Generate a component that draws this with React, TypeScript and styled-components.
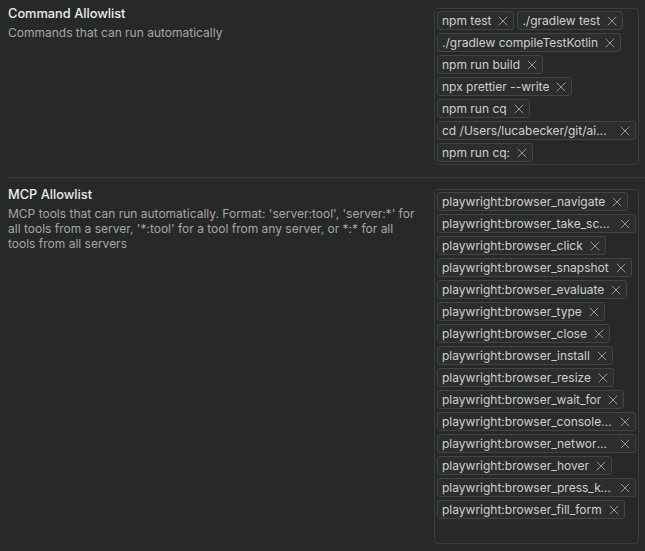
import React from "react";
import styled, { createGlobalStyle } from "styled-components";
import { X } from "lucide-react";

const GlobalStyle = createGlobalStyle`
  html, body {
    margin: 0;
    padding: 0;
    background: #272828;
  }
  body {
    font-family: Inter, "Noto Sans", "Liberation Sans", sans-serif;
    -webkit-font-smoothing: antialiased;
  }
  * { box-sizing: border-box; }
`;

const Page = styled.div`
  padding: 8px 6px 0 8px;
  width: 645px;
  height: 551px;
  overflow: hidden;
`;

const Section = styled.section`
  display: flex;
  align-items: flex-start;
  gap: 16px;
`;

const Info = styled.div`
  flex: 1;
  min-width: 0;
`;

const Title = styled.div`
  font-size: 12.8px;
  font-weight: 500;
  line-height: 16px;
  color: #ececec;
  margin-top: -2px;
`;

const Description = styled.div`
  font-size: 12px;
  line-height: 15px;
  color: #a6a6a6;
  margin-top: 3px;
`;

const Divider = styled.hr`
  border: none;
  border-top: 1px solid #3a3b3b;
  margin: 12px -6px 11px 0;
  height: 0;
`;

const TagBox = styled.div`
  width: 205px;
  flex-shrink: 0;
  border: 1px solid #3b3c3c;
  border-radius: 4px;
  padding: 2px;
  display: flex;
  flex-wrap: wrap;
  align-content: flex-start;
  gap: 3px;
`;

const Chip = styled.span`
  display: inline-flex;
  align-items: center;
  gap: 4px;
  height: 19px;
  max-width: 100%;
  padding: 0 2px 0 4px;
  border: 1px solid #434444;
  border-radius: 3px;
  background: #2c2d2d;
  color: #d0d0d0;
  font-size: 12px;
  line-height: 17px;
`;

const ChipLabel = styled.span`
  white-space: nowrap;
  overflow: hidden;
  text-overflow: ellipsis;
  min-width: 0;
`;

const Remove = styled.span`
  display: inline-flex;
  flex-shrink: 0;
  color: #a0a0a0;
`;

const AddInput = styled.input`
  flex: 1;
  min-width: 60px;
  height: 19px;
  border: none;
  outline: none;
  background: transparent;
  color: #d0d0d0;
  font: inherit;
  font-size: 12px;
  padding: 0 4px;
`;

const commands = [
  "npm test",
  "./gradlew test",
  "./gradlew compileTestKotlin",
  "npm run build",
  "npx prettier --write",
  "npm run cq",
  "cd /Users/lucabecker/git/aicoding && npm run cq",
  "npm run cq:",
];

const mcpTools = [
  "playwright:browser_navigate",
  "playwright:browser_take_screenshot",
  "playwright:browser_click",
  "playwright:browser_snapshot",
  "playwright:browser_evaluate",
  "playwright:browser_type",
  "playwright:browser_close",
  "playwright:browser_install",
  "playwright:browser_resize",
  "playwright:browser_wait_for",
  "playwright:browser_console_messages",
  "playwright:browser_network_requests",
  "playwright:browser_hover",
  "playwright:browser_press_key",
  "playwright:browser_fill_form",
];

function TagList({ items }: { items: string[] }) {
  return (
    <TagBox>
      {items.map((item) => (
        <Chip key={item} title={item}>
          <ChipLabel>{item}</ChipLabel>
          <Remove>
            <X size={16} strokeWidth={1.4} />
          </Remove>
        </Chip>
      ))}
      <AddInput aria-label="Add entry" />
    </TagBox>
  );
}

export default function App() {
  return (
    <>
      <GlobalStyle />
      <Page>
        <Section>
          <Info>
            <Title>Command Allowlist</Title>
            <Description>Commands that can run automatically</Description>
          </Info>
          <TagList items={commands} />
        </Section>
        <Divider />
        <Section>
          <Info>
            <Title>MCP Allowlist</Title>
            <Description>
              MCP tools that can run automatically. Format: 'server:tool',
              'server:*' for all tools from a server, '*:tool' for a tool from
              any server, or *:* for all tools from all servers
            </Description>
          </Info>
          <TagList items={mcpTools} />
        </Section>
      </Page>
    </>
  );
}
